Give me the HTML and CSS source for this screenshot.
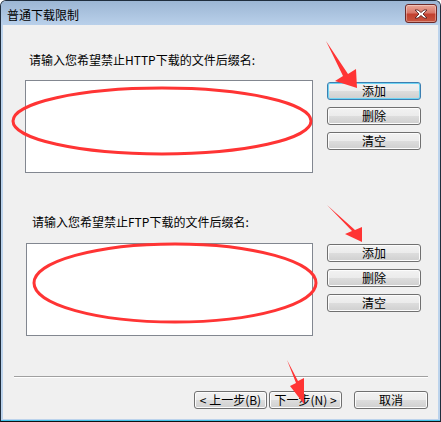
FILE: index.html
```html
<!DOCTYPE html>
<html lang="zh-CN">
<head>
  <meta charset="UTF-8">
  <meta name="viewport" content="width=device-width, initial-scale=1">
  <title>普通下载限制</title>
  <link rel="stylesheet" href="styles.css">
</head>
<body>

<div class="window">
  <!-- Title bar -->
  <div class="titlebar">
    <span class="title">普通下载限制</span>
    <button class="close-btn" title="关闭">
      <svg width="16" height="10" viewBox="0 0 16 10">
        <path d="M2 1 L5 1 L8 3.5 L11 1 L14 1 L10 5 L14 9 L11 9 L8 6.5 L5 9 L2 9 L6 5 Z" fill="#fff" stroke="#4a1a1a" stroke-width="0.8" stroke-linejoin="round"/>
      </svg>
    </button>
  </div>

  <div class="client">
    <!-- HTTP -->
    <div class="group group-http">
      <p class="prompt">请输入您希望禁止HTTP下载的文件后缀名:</p>
      <div class="row">
        <div class="listbox"></div>
        <div class="actions">
          <button class="btn focused">添加</button>
          <button class="btn">删除</button>
          <button class="btn">清空</button>
        </div>
      </div>
    </div>

    <!-- FTP -->
    <div class="group group-ftp">
      <p class="prompt">请输入您希望禁止FTP下载的文件后缀名:</p>
      <div class="row">
        <div class="listbox"></div>
        <div class="actions">
          <button class="btn">添加</button>
          <button class="btn">删除</button>
          <button class="btn">清空</button>
        </div>
      </div>
    </div>

    <div class="separator"></div>

    <div class="footer">
      <button class="btn btn-nav">&lt; 上一步(B)</button>
      <button class="btn btn-nav btn-next">下一步(N) &gt;</button>
      <button class="btn btn-cancel">取消</button>
    </div>
  </div>

  <!-- red annotation marks drawn over the dialog -->
  <svg class="marks" width="441" height="422" viewBox="0 0 441 422">
    <ellipse cx="162" cy="121" rx="149" ry="33" fill="none" stroke="#ff3434" stroke-width="3"/>
    <ellipse cx="175" cy="283" rx="141" ry="39" fill="none" stroke="#ff3434" stroke-width="3"/>
    <polygon points="326,41 348,74 356,69 357,88 335,81 343,76" fill="#ff3434"/>
    <polygon points="327,205 355,230 362,227 362,242 345,234 352,231" fill="#ff3434"/>
    <polygon points="287,360 298,381 304,378 304,404 290,386 296,383" fill="#ff3434"/>
  </svg>
</div>

</body>
</html>
```

FILE: styles.css
```css
body {
  margin: 0;
  font-family: "Noto Sans CJK SC", "Liberation Sans", sans-serif;
  font-size: 12px;
  color: #000;
  background: #fff;
}
.window {
  position: relative;
  width: 441px;
  height: 422px;
  box-sizing: border-box;
  border: 1px solid #1f2d3d;
  border-radius: 6px 6px 0 0;
  background: #bcd3ec;
  padding-bottom: 2px;
  display: flex;
  flex-direction: column;
  border-bottom-color: #111;
  box-shadow: inset 0 -1px 0 #42c2e8;
}
.titlebar {
  height: 24px;
  display: flex;
  align-items: flex-start;
  justify-content: space-between;
  padding: 0 3px 0 6px;
  background: linear-gradient(#9cb6d4, #b9d0ea);
  border-radius: 5px 5px 0 0;
}
.title {
  line-height: 16px;
  margin-top: 6px;
  font-size: 12px;
}
.close-btn {
  width: 32px;
  height: 19px;
  margin-top: 3px;
  padding: 0;
  border: 1px solid #6e2a28;
  border-radius: 3px;
  background: linear-gradient(#e9a797 0%, #d9786a 45%, #c2402f 55%, #c8553f 100%);
  box-shadow: inset 0 0 0 1px rgba(255,255,255,0.35);
  display: flex;
  align-items: center;
  justify-content: center;
}
.client {
  flex: 1;
  margin: 0 2px;
  background: #f0f0f0;
  display: flex;
  flex-direction: column;
}
.group-http {
  padding: 27px 0 0 22px;
}
.group-ftp {
  padding: 41px 0 0 23px;
}
.prompt {
  margin: 0;
  line-height: 16px;
  height: 16px;
}
.group-http .prompt {
  padding-left: 4px;
  margin-bottom: 12px;
}
.group-ftp .prompt {
  padding-left: 6px;
  margin-bottom: 13px;
}
.row {
  display: flex;
  gap: 14px;
}
.listbox {
  box-sizing: border-box;
  height: 93px;
  background: #fff;
  border: 1px solid #828790;
}
.group-http .listbox {
  width: 288px;
}
.group-ftp .listbox {
  width: 287px;
}
.actions {
  display: flex;
  flex-direction: column;
  gap: 7px;
  padding-top: 2px;
}
.group-ftp .actions {
  padding-top: 1px;
}
.btn {
  box-sizing: border-box;
  width: 94px;
  height: 18px;
  padding: 0;
  font-family: inherit;
  font-size: 12px;
  line-height: 16px;
  color: #000;
  border: 1px solid #707070;
  border-radius: 3px;
  background: linear-gradient(#f2f2f2 0%, #ebebeb 50%, #dddddd 51%, #cfcfcf 100%);
  box-shadow: inset 0 0 0 1px #fcfcfc;
}
.btn.focused {
  border-color: #3c7fb1;
  box-shadow: inset 0 0 0 1px #6fd4f3;
}
.separator {
  margin: 40px 10px 0 11px;
  border-top: 1px solid #a0a0a0;
  border-bottom: 1px solid #fff;
}
.footer {
  display: flex;
  justify-content: flex-end;
  padding: 13px 10px 0 0;
}
.btn-nav {
  width: 73px;
}
.btn-next {
  margin-left: 2px;
}
.btn-cancel {
  width: 74px;
  margin-left: 12px;
}
.marks {
  position: absolute;
  left: -1px;
  top: -1px;
  pointer-events: none;
}
```
